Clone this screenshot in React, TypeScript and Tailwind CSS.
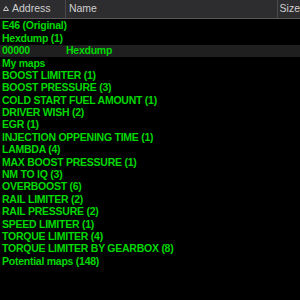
const rows: { a: string; b?: string; sel?: boolean }[] = [
  { a: "E46 (Original)" },
  { a: "Hexdump (1)" },
  { a: "00000", b: "Hexdump", sel: true },
  { a: "My maps" },
  { a: "BOOST LIMITER (1)" },
  { a: "BOOST PRESSURE (3)" },
  { a: "COLD START FUEL AMOUNT (1)" },
  { a: "DRIVER WISH (2)" },
  { a: "EGR (1)" },
  { a: "INJECTION OPPENING TIME (1)" },
  { a: "LAMBDA (4)" },
  { a: "MAX BOOST PRESSURE (1)" },
  { a: "NM TO IQ (3)" },
  { a: "OVERBOOST (6)" },
  { a: "RAIL LIMITER (2)" },
  { a: "RAIL PRESSURE (2)" },
  { a: "SPEED LIMITER (1)" },
  { a: "TORQUE LIMITER (4)" },
  { a: "TORQUE LIMITER BY GEARBOX (8)" },
  { a: "Potential maps (148)" },
];

export default function App() {
  return (
    <div className="w-[300px] h-[300px] bg-black overflow-hidden font-['Liberation_Sans',sans-serif]">
      <div className="flex h-[19px] bg-[#2d2d2f] border-b border-[#5a5a5c] text-[10.5px] text-[#cfcfcf]">
        <div className="w-[66px] flex items-center border-r border-[#4a4a4c] pl-[3px]">
          <svg width="6" height="5" viewBox="0 0 6 5" className="mr-[3px] mb-[2px]">
            <path d="M3 0.5 L5.5 4.5 L0.5 4.5 Z" fill="none" stroke="#c8c8c8" strokeWidth="1" />
          </svg>
          Address
        </div>
        <div className="w-[212px] flex items-center border-r border-[#4a4a4c] pl-[3px]">Name</div>
        <div className="flex-1 flex items-center pl-[2px]">Size</div>
      </div>
      <div className="pt-[1px] text-[10.5px] tracking-[-0.25px] font-bold text-[#00d800]">
        {rows.map((r, i) => (
          <div key={i} className={`flex h-[12.4px] items-center whitespace-nowrap ${r.sel ? "bg-[#1f1f1f]" : ""}`}>
            {r.b ? (
              <>
                <div className="w-[66px] pl-[2px]">{r.a}</div>
                <div>{r.b}</div>
              </>
            ) : (
              <div className="pl-[2px]">{r.a}</div>
            )}
          </div>
        ))}
      </div>
    </div>
  );
}
